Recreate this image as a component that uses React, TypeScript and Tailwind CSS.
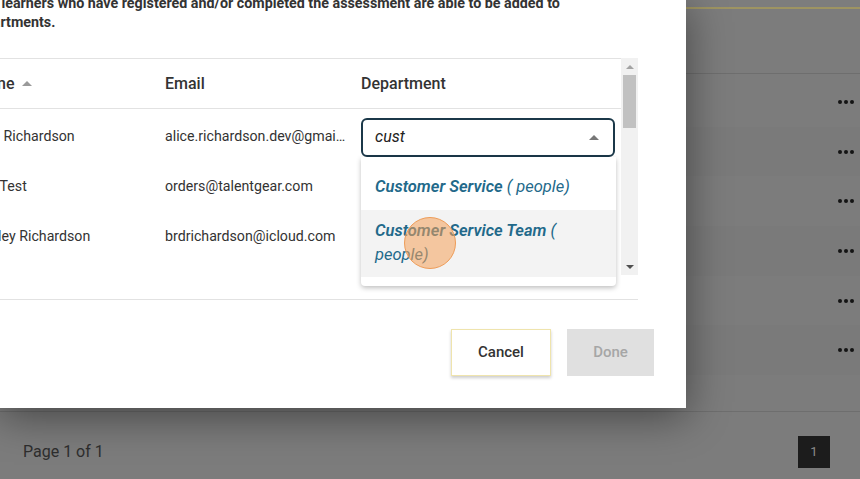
import React from "react";

const rows = [
  { name: "Alice Richardson", email: "alice.richardson.dev@gmail.com" },
  { name: "Test Test", email: "orders@talentgear.com" },
  { name: "Bradley Richardson", email: "brdrichardson@icloud.com" },
];

function Dots() {
  return (
    <div className="flex gap-[2px]">
      <span className="size-[4px] rounded-full bg-[#141414]" />
      <span className="size-[4px] rounded-full bg-[#141414]" />
      <span className="size-[4px] rounded-full bg-[#141414]" />
    </div>
  );
}

function Caret({ down = false, color }: { down?: boolean; color: string }) {
  return (
    <svg width="10" height="5" viewBox="0 0 10 5" className="shrink-0">
      <path d={down ? "M0 0h10L5 5z" : "M0 5h10L5 0z"} fill={color} />
    </svg>
  );
}

function BackgroundPage() {
  return (
    <div className="flex h-full flex-col">
      <div className="h-[7px] bg-[#7d7d7d]" />
      <div className="h-[2px] bg-[#9e9462]" />
      <div className="h-[65px] border-b border-[#6e6e6e] bg-[#7c7c7c]" />
      <div className="pt-[3px]">
        {[0, 1, 2, 3, 4, 5].map((i) => (
          <div
            key={i}
            className={`flex h-[49.7px] items-center justify-end pr-[6px] ${
              i % 2 === 0 ? "bg-[#7c7c7c]" : "bg-[#7a7a7a]"
            }`}
          >
            <Dots />
          </div>
        ))}
      </div>
      <div className="flex-1 border-b border-[#6e6e6e]" />
      <div className="flex h-[67px] items-start justify-between pl-[23px] pr-[30px] pt-[24px]">
        <span className="text-[16px] leading-[32px] text-[#2e2e2e]">Page 1 of 1</span>
        <div className="flex size-[32px] items-center justify-center bg-[#1c1c1c] text-[13px] text-[#8c8c8c]">
          1
        </div>
      </div>
    </div>
  );
}

export default function App() {
  return (
    <div className="relative h-[479px] w-[860px] overflow-hidden bg-[#7c7c7c] font-['Roboto',sans-serif]">
      <BackgroundPage />

      <div className="absolute left-0 top-0 h-[408px] w-[686px] overflow-hidden bg-white shadow-[0_8px_40px_rgba(0,0,0,0.45)]">
        <p className="ml-[-31px] mt-[-6px] h-[39px] w-[610px] text-[14.3px] font-bold leading-[19px] text-[#333]">
          Only learners who have registered and/or completed the assessment are able to be added to departments.
        </p>

        <div className="ml-[-28px] mt-[25px] w-[666px] border-b border-[#e2e2e2] pb-[24px]">
          <div className="flex">
            <div className="w-[649px]">
              <div className="flex h-[51px] items-center border-y border-[#e2e2e2] text-[16px] font-medium text-[#333]">
                <div className="flex w-[193px] items-center gap-[8px]">
                  Name
                  <Caret color="#9a9a9a" />
                </div>
                <div className="w-[196px]">Email</div>
                <div className="flex-1">Department</div>
              </div>

              {rows.map((r, i) => (
                <div key={r.email} className="flex h-[50px] items-center pt-[6px] text-[14.2px] text-[#333]">
                  <div className="ml-[-3px] w-[196px]">{r.name}</div>
                  <div className="w-[196px] pr-[14px]">
                    <div className="truncate">{r.email}</div>
                  </div>
                  <div className="relative flex-1 pr-[6px]">
                    {i === 0 && (
                      <>
                        <div className="flex h-[39px] items-center justify-between rounded-[6px] border-2 border-[#1b3849] pl-[12px] pr-[14px]">
                          <span className="text-[16px] italic text-[#222]">cust</span>
                          <Caret color="#777" />
                        </div>
                        <div className="absolute left-0 top-[39px] z-10 w-[255px] rounded-b-[4px] bg-white pb-[9px] pt-[5px] shadow-[0_2px_5px_rgba(0,0,0,0.25)]">
                          <div className="px-[14px] pb-[11px] pt-[13px] text-[16.5px] italic leading-[24px] text-[#22698a]">
                            <span className="font-semibold">Customer Service</span> ( people)
                          </div>
                          <div className="bg-[#f3f3f3] px-[14px] pb-[10px] pt-[9px] text-[16.5px] italic leading-[24px] text-[#22698a]">
                            <span className="font-semibold">Customer Service Team</span> ( people)
                          </div>
                        </div>
                      </>
                    )}
                  </div>
                </div>
              ))}
              <div className="h-[16px]" />
            </div>

            <div className="flex h-[217px] w-[17px] flex-col items-center bg-[#f1f1f1]">
              <div className="flex h-[17px] items-center">
                <svg width="8" height="4" viewBox="0 0 8 4">
                  <path d="M0 4h8L4 0z" fill="#a3a3a3" />
                </svg>
              </div>
              <div className="h-[53px] w-[13px] bg-[#c1c1c1]" />
              <div className="flex-1" />
              <div className="flex h-[17px] items-center">
                <svg width="8" height="4" viewBox="0 0 8 4">
                  <path d="M0 0h8L4 4z" fill="#505050" />
                </svg>
              </div>
            </div>
          </div>
        </div>

        <div className="mt-[29px] flex justify-end gap-[16px] pr-[32px]">
          <button className="h-[47px] w-[100px] border border-[#efe4ad] bg-white text-[15px] font-medium text-[#333] shadow-[0_2px_3px_rgba(0,0,0,0.2)]">
            Cancel
          </button>
          <button className="h-[47px] w-[87px] bg-[#e0e0e0] text-[15px] font-medium text-[#a6a6a6]">
            Done
          </button>
        </div>

        <div className="absolute left-[404px] top-[217px] z-20 size-[52px] rounded-full border border-[#ee9c58] bg-[rgba(244,160,90,0.55)]" />
      </div>
    </div>
  );
}
